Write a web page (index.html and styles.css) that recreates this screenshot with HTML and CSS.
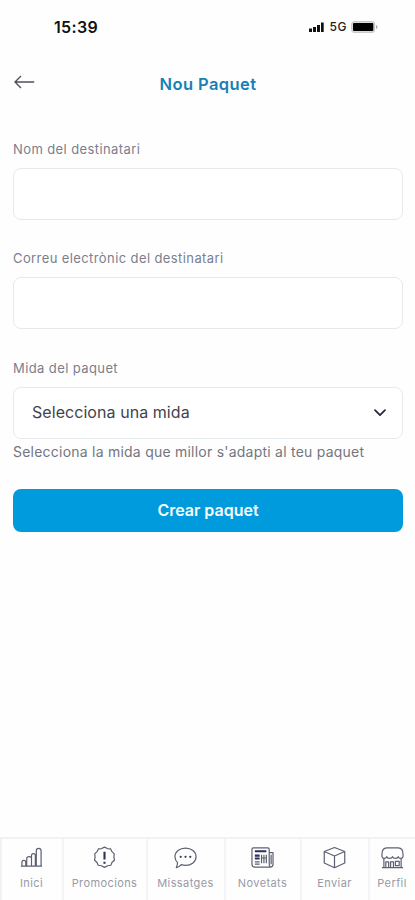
FILE: index.html
```html
<!DOCTYPE html>
<html lang="ca">
<head>
<meta charset="utf-8">
<meta name="viewport" content="width=device-width, initial-scale=1">
<title>Nou Paquet</title>
<link rel="stylesheet" href="styles.css">
</head>
<body>
<div class="app">
  <div class="status">
    <span class="time">15:39</span>
    <div class="indicators">
      <svg class="signal" width="15" height="10" viewBox="0 0 15 10"><path d="M0 6.500h3V10H0zM4 5h3v5H4zM8 3h3v7H8zM12 .5h2.700V10H12z"/></svg>
      <span class="network">5G</span>
      <svg class="battery" width="27" height="12" viewBox="0 0 27 12"><rect x=".6" y=".6" width="23" height="10.800" rx="2.600" fill="#ddd" stroke="#c5c5c5"/><rect x="2" y="2" width="20.300" height="8" rx="1" fill="#000"/><path d="M25 4v4q1.500-.6 1.500-2T25 4z" fill="#aaa"/></svg>
    </div>
  </div>
  <header class="header">
    <svg class="back" width="21" height="14" viewBox="0 0 21 14"><path d="M20.200 7H1M7 1 1 7l6 6"/></svg>
    <h1>Nou Paquet</h1>
  </header>
  <main class="form">
    <label class="field"><span class="label">Nom del destinatari</span><input type="text"></label>
    <label class="field"><span class="label">Correu electrònic del destinatari</span><input type="text"></label>
    <div class="field"><span class="label">Mida del paquet</span>
      <div class="select"><span>Selecciona una mida</span><svg width="12" height="8" viewBox="0 0 12 8"><path d="m1 1.200 5 5 5-5"/></svg></div>
    </div>
    <p class="help">Selecciona la mida que millor s'adapti al teu paquet</p>
    <button class="submit" type="button">Crear paquet</button>
  </main>
  <nav class="tabs">
    <a class="tab"><svg viewBox="0 0 24 24"><path d="M1 21h22M2 21v-4q0-2 2-2t2 2v4M7 21v-8q0-2 2.500-2t2.500 2v8M12 21v-11q0-2 2-2t2 2v11M17 21V5q0-2.500 2.500-2.500T22 5v16"/></svg><span>Inici</span></a>
    <a class="tab"><svg viewBox="0 0 24 24"><path d="m12 1.200 3 1.500 3.300.2 1.500 3 2.400 2.300-.4 3.300.6 3.300-2.500 2.200-1.300 3.100-3.300.5L12 22.300l-3.300-1.700-3.300-.5-1.300-3.100-2.500-2.200.6-3.300-.4-3.300 2.400-2.300 1.500-3 3.300-.2z"/><path class="strong" d="M12 6v8M12 16.500v2"/></svg><span>Promocions</span></a>
    <a class="tab"><svg viewBox="0 0 24 24"><path d="M12 2.200c6.200 0 11 3.900 11 9s-4.800 9.100-11 9.100c-1.600 0-3.100-.3-4.500-.8-1.400 1.900-3 2.900-5.100 3 .8-1.500 1.300-3.100 1.300-5.200C2 15.600 1 13.500 1 11.200c0-5.100 4.800-9 11-9z"/><path class="dots" d="M7 11.300h.01M12 11.300h.01M17 11.300h.01"/></svg><span>Missatges</span></a>
    <a class="tab"><svg viewBox="0 0 24 24"><path d="M19 18V3.500Q19 2 17.500 2h-15Q1 2 1 3.500V19q0 3 3 3h16q3 0 3-3V7h-4M19 18q0 4 2 4M21 9v10"/><path class="strong" d="M4 5.500h12M4 10h5M4 13h5"/><path d="M11 9v9M13.500 9v9M16 9v9M11 12.500h5M4 16.500h5M4 19h5"/></svg><span>Novetats</span></a>
    <a class="tab"><svg viewBox="0 0 24 24"><path d="m12 1.500 10.700 4.300v12L12 22.700 1.300 17.800v-12zM1.300 5.800 12 10.500l10.700-4.700M12 10.500v12.200"/></svg><span>Enviar</span></a>
    <a class="tab"><svg viewBox="0 0 24 24"><path d="M1 9q0-7 5-7h12q5 0 5 7v2q-.5 2-2.500 2T18 11q-.5 2-3 2t-3-2q-.5 2-3 2t-3-2q-.5 2-2.500 2T1 11zM3 13v9.500M21 13v9.500M1 22.500h22M5 22.500v-6h3v6M10 22.500v-6h3v6M15 16h4v4.500h-4z"/></svg><span>Perfil</span></a>
  </nav>
</div>
</body>
</html>
```
FILE: styles.css
```css
* { box-sizing: border-box; }
body { margin: 0; background: #fefefe; font-family: Inter, "Liberation Sans", sans-serif; }
svg { display: block; flex: none; fill: none; }
.app { height: 900px; display: flex; flex-direction: column; overflow: hidden; }
.status { height: 56px; padding: 0 37px 2px 54px; display: flex; align-items: center; justify-content: space-between; }
.time { font-size: 16px; font-weight: 600; color: #111; letter-spacing: .35px; }
.indicators { display: flex; align-items: center; margin-top: -1px; }
.signal { fill: #111; margin-right: 5px; }
.network { font-size: 12px; font-weight: 500; color: #222; margin-right: 4px; letter-spacing: .6px; }
.header { height: 56px; display: grid; grid-template-columns: 40px 1fr 40px; align-items: center; padding-left: 14px; padding-right: 13px; }
.back { stroke: #50525b; stroke-width: 1.4; margin-top: -4px; }
h1 { margin: 0; text-align: center; font-size: 16.5px; line-height: 20px; font-weight: 600; color: #1780b5; letter-spacing: .4px; }
.form { padding: 27px 12px 0 13px; flex: 1; }
.field { display: block; height: 109.250px; }
.label { display: block; width: max-content; height: 29px; font-size: 13px; line-height: 20px; color: #7b7e8c; letter-spacing: .4px; }
input, .select { display: flex; width: 100%; height: 52px; border: 1px solid #e7eaed; border-radius: 8px; background: #fff; outline: 0; }
.select { align-items: center; justify-content: space-between; padding: 0 16px 2px 18px; font-size: 16px; color: #42434c; letter-spacing: .06px; }
.select svg { stroke: #252838; stroke-width: 1.7; stroke-linecap: round; stroke-linejoin: round; margin-top: 2px; }
.help { margin: -25.250px 0 0; height: 47px; font-size: 14px; line-height: 20px; color: #74767f; white-space: nowrap; letter-spacing: .23px; }
.submit { display: block; width: 100%; height: 43px; border: 0; border-radius: 8px; background: #009bdc; color: #f5fcff; font: 600 16px/20px Inter, sans-serif; padding: 0; }
.tabs { height: 63px; display: grid; grid-template-columns: 62px 84px 78px 76px 68px 46px; border-top: 2px solid #f0f2f4; border-left: 2px solid #f0f2f4; }
.tab { display: flex; flex-direction: column; align-items: center; padding: 7px 1px 0 0; border-right: 2px solid #f2f4f5; color: #989aa6; }
.tab:last-child { border-right: 0; padding-right: 2px; }
.tab svg { width: 23px; height: 23px; stroke: #5c6071; stroke-width: 1.25; stroke-linejoin: round; }
.tab .strong { stroke: #2b315b; stroke-width: 2.2; }
.tab .dots { stroke: #353a51; stroke-width: 2.3; stroke-linecap: round; }
.tab span { font-size: 11px; line-height: 16px; margin-top: 6px; letter-spacing: .4px; }
```
